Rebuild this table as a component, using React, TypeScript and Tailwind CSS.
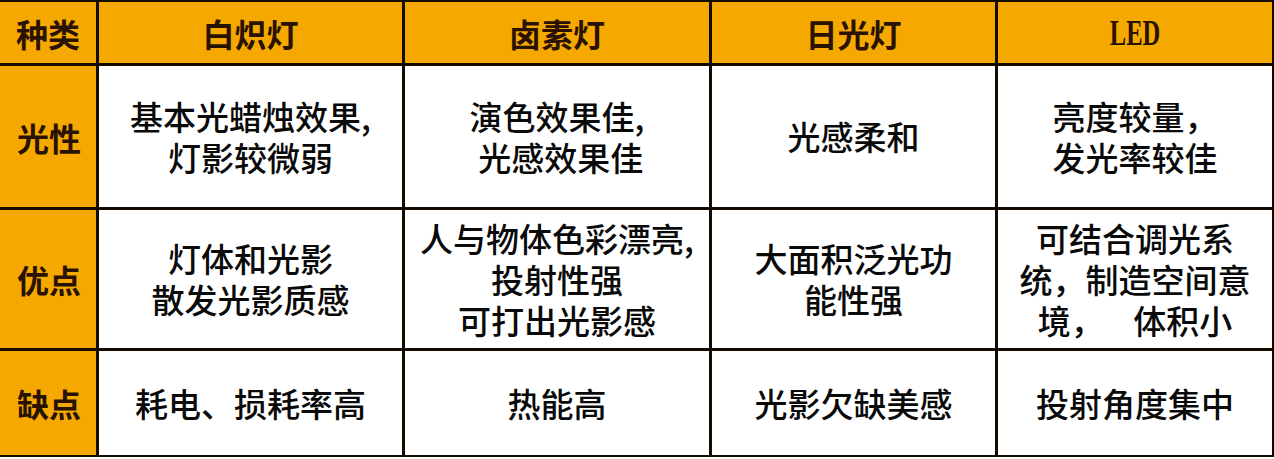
import React from "react";

const cjk = { fontFamily: '"Noto Sans CJK SC", "Noto Sans", sans-serif' };
const serif = { fontFamily: '"Liberation Serif", "DejaVu Serif", serif' };

function Head({ children, isSerif }: { children: React.ReactNode; isSerif?: boolean }) {
  return (
    <div className="flex items-center justify-center bg-[#f5a800]">
      {isSerif ? (
        <span className="inline-block scale-x-[0.7] text-[35px] font-bold leading-none text-[#2a1200] pt-[2px]" style={serif}>
          {children}
        </span>
      ) : (
        <span className="text-[32px] font-bold leading-none text-[#2a1200]" style={cjk}>
          {children}
        </span>
      )}
    </div>
  );
}

function Side({ children }: { children: React.ReactNode }) {
  return (
    <div className="flex items-center justify-center bg-[#f5a800]">
      <span className="text-[32px] font-bold leading-none text-[#2a1200] pl-[2px]" style={cjk}>
        {children}
      </span>
    </div>
  );
}

function Cell({ lines }: { lines: string[] }) {
  return (
    <div className="flex items-center justify-center bg-white">
      <div
        className="flex flex-col items-center text-[33px] font-medium leading-[41px] text-[#0a0a0a] whitespace-pre"
        style={cjk}
      >
        {lines.map((l, i) => (
          <span key={i}>{l}</span>
        ))}
      </div>
    </div>
  );
}

export default function App() {
  return (
    <div className="w-[1274px] bg-white">
      <div className="grid grid-cols-[96px_303px_304px_283px_274px] grid-rows-[61px_141px_138px_104px] gap-[3px] bg-[#140a00] border-t-2 border-b-2 border-r-2 border-[#140a00] w-[1274px]">
        <Head>种类</Head>
        <Head>白炽灯</Head>
        <Head>卤素灯</Head>
        <Head>日光灯</Head>
        <Head isSerif>LED</Head>

        <Side>光性</Side>
        <Cell lines={["基本光蜡烛效果,", "灯影较微弱"]} />
        <Cell lines={["演色效果佳,", " 光感效果佳"]} />
        <Cell lines={["光感柔和"]} />
        <Cell lines={["亮度较量，", "发光率较佳"]} />

        <Side>优点</Side>
        <Cell lines={["灯体和光影", "散发光影质感"]} />
        <Cell lines={["人与物体色彩漂亮,", "投射性强", "可打出光影感"]} />
        <Cell lines={["大面积泛光功", "能性强"]} />
        <Cell lines={["可结合调光系", "统，制造空间意", "境，    体积小"]} />

        <Side>缺点</Side>
        <Cell lines={["耗电、损耗率高"]} />
        <Cell lines={["热能高"]} />
        <Cell lines={["光影欠缺美感"]} />
        <Cell lines={["投射角度集中"]} />
      </div>
    </div>
  );
}
